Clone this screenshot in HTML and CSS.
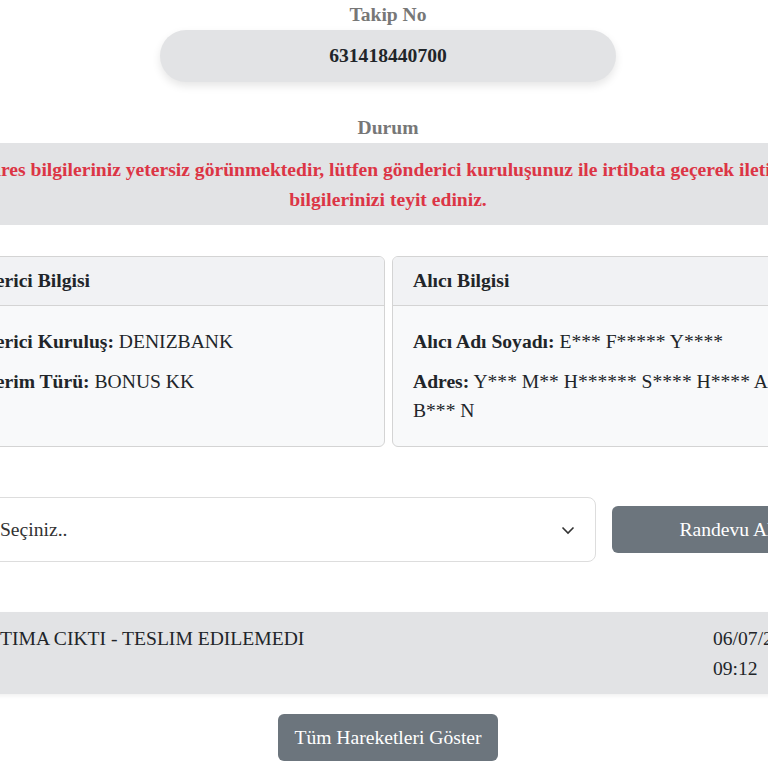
FILE: index.html
```html
<!DOCTYPE html>
<html lang="tr">
<head>
    <meta charset="UTF-8">
    <meta name="viewport" content="width=device-width, initial-scale=1.0">
    <title>Gönderi Takip</title>
    <link rel="stylesheet" href="styles.css">
</head>
<body>

    <div class="tracking">
        <div class="label">Takip No</div>
        <div class="tracking-no">631418440700</div>

        <div class="label status-label">Durum</div>
        <div class="status-alert">
            Adres bilgileriniz yetersiz görünmektedir, lütfen gönderici kuruluşunuz ile irtibata geçerek iletişim bilgilerinizi teyit ediniz.
        </div>

        <div class="info-cards">
            <div class="info-card">
                <div class="info-header">Gönderici Bilgisi</div>
                <div class="info-body">
                    <p><b>Gönderici Kuruluş:</b> DENIZBANK</p>
                    <p><b>Gönderim Türü:</b> BONUS KK</p>
                </div>
            </div>
            <div class="info-card">
                <div class="info-header">Alıcı Bilgisi</div>
                <div class="info-body">
                    <p><b>Alıcı Adı Soyadı:</b> E*** F***** Y****</p>
                    <p><b>Adres:</b> Y*** M** H****** S**** H**** A*** B*** N</p>
                </div>
            </div>
        </div>

        <div class="appointment">
            <div class="date-select">
                <span>Tarih Seçiniz..</span>
                <svg width="14" height="14" viewBox="0 0 14 14"><path d="M1.5 4.5 L7 10 L12.5 4.5" fill="none" stroke="#333" stroke-width="1.6"/></svg>
            </div>
            <button class="btn">Randevu Al</button>
        </div>

        <div class="movement">
            <div class="movement-text">DAĞITIMA CIKTI - TESLIM EDILEMEDI</div>
            <div class="movement-date">06/07/2025<br>09:12</div>
        </div>

        <div class="center">
            <button class="btn">Tüm Hareketleri Göster</button>
        </div>
    </div>

</body>
</html>
```

FILE: styles.css
```css
body {
    font-family: "Liberation Serif", "Times New Roman", serif;
    font-size: 19.6px;
    color: #212529;
    background-color: #fff;
    margin: 0;
    overflow: hidden;
}

.tracking {
    width: 904px;
    margin-left: -64px;
    padding-top: 3px;
}

.label {
    text-align: center;
    font-weight: bold;
    color: #777;
    line-height: 24px;
}

.tracking-no {
    width: 456px;
    margin: 3px auto 0;
    height: 52px;
    line-height: 52px;
    text-align: center;
    font-weight: bold;
    background-color: #e2e3e5;
    border-radius: 26px;
    box-shadow: 0 4px 8px rgba(0, 0, 0, 0.1);
}

.status-label {
    margin-top: 34px;
}

.status-alert {
    margin-top: 3px;
    padding: 12px 16px 10px;
    background-color: #e2e3e5;
    color: #dc3545;
    font-weight: bold;
    text-align: center;
    line-height: 30px;
}

.info-cards {
    display: grid;
    grid-template-columns: 457px 448px;
    gap: 7px;
    margin-top: 31px;
    margin-left: -8px;
}

.info-card {
    background-color: #f8f9fa;
    border: 1px solid #d4d4d4;
    border-radius: 6px;
    overflow: hidden;
}

.info-header {
    background-color: #f1f2f4;
    border-bottom: 1px solid #d4d4d4;
    padding: 12px 20px;
    line-height: 24px;
    font-weight: bold;
}

.info-body {
    padding: 21px 20px 10px;
}

.info-body p {
    margin: 0 0 11px;
    line-height: 29px;
}

.appointment {
    display: flex;
    align-items: center;
    gap: 16px;
    margin-top: 50px;
}

.date-select {
    flex: 0 0 660px;
    height: 65px;
    box-sizing: border-box;
    border: 1px solid #ddd;
    border-radius: 8px;
    padding: 0 20px 0 17px;
    display: flex;
    align-items: center;
    justify-content: space-between;
    color: #333;
}

.btn {
    font-family: inherit;
    font-size: 19.6px;
    color: #fff;
    background-color: #6c757d;
    border: none;
    border-radius: 6px;
    padding: 11px 16px;
    line-height: 25px;
}

.appointment .btn {
    flex: 1;
}

.movement {
    margin-top: 50px;
    display: flex;
    justify-content: space-between;
    background-color: #e2e3e5;
    padding: 12px 20px 10px 15px;
    line-height: 30px;
    box-shadow: 0 2px 4px rgba(0, 0, 0, 0.06);
}

.movement-date {
    width: 107px;
}

.center {
    text-align: center;
    margin-top: 20px;
}
```
